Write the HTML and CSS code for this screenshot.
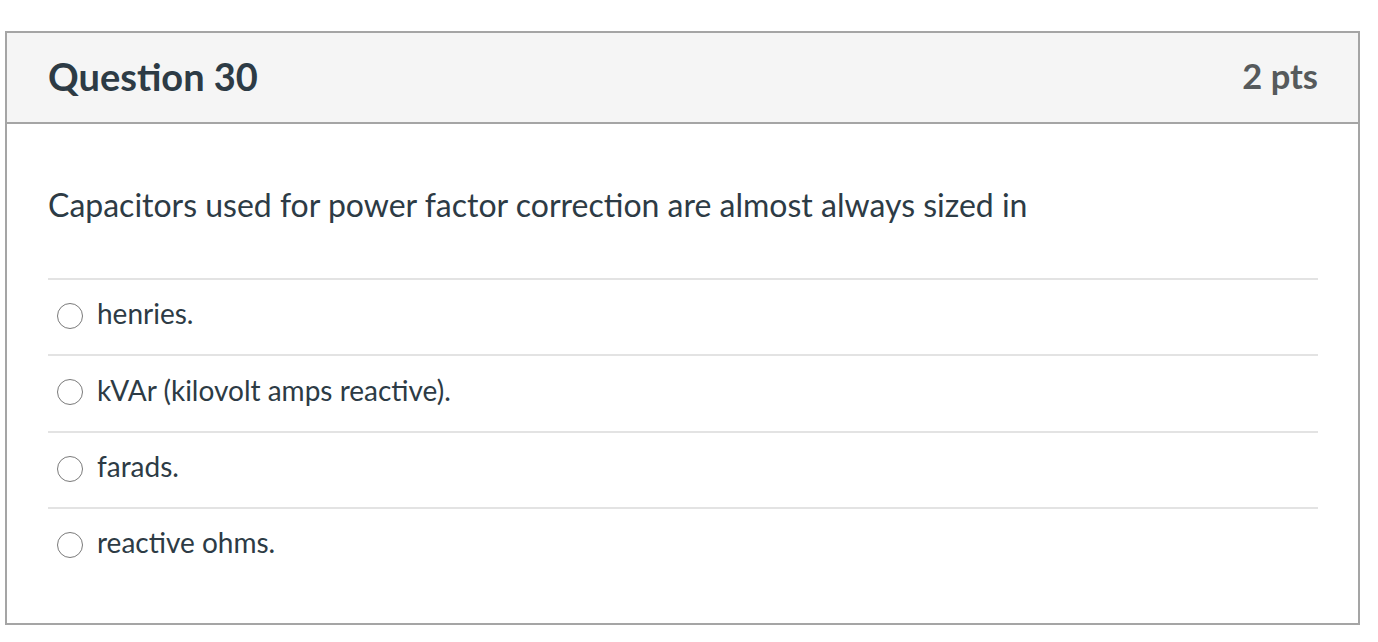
FILE: index.html
```html
<!DOCTYPE html>
<html>
<head>
<meta charset="utf-8">
<link rel="stylesheet" href="styles.css">
</head>
<body>
<div class="question">
  <div class="q-header">
    <h2 class="q-title">Question 30</h2>
    <span class="q-pts">2 pts</span>
  </div>
  <div class="q-body">
    <p class="q-text">Capacitors used for power factor correction are almost always sized in</p>
    <div class="answers">
      <label class="answer"><span class="radio"></span><span class="a-text">henries.</span></label>
      <label class="answer"><span class="radio"></span><span class="a-text">kVAr (kilovolt amps reactive).</span></label>
      <label class="answer"><span class="radio"></span><span class="a-text">farads.</span></label>
      <label class="answer"><span class="radio"></span><span class="a-text">reactive ohms.</span></label>
    </div>
  </div>
</div>
</body>
</html>
```
FILE: styles.css
```css
html, body {
  margin: 0;
  padding: 0;
  background: #fff;
}
body {
  font-family: Lato, "Open Sans", sans-serif;
  color: #2d3b45;
}
.question {
  margin: 31px 0 0 5px;
  width: 1355px;
  height: 594px;
  box-sizing: border-box;
  border: 2px solid #a5a5a5;
}
.q-header {
  display: flex;
  justify-content: space-between;
  align-items: center;
  height: 91px;
  box-sizing: border-box;
  background: #f5f5f5;
  border-bottom: 2px solid #a5a5a5;
  padding: 0 40px 4px 41px;
}
.q-title {
  margin: 0;
  font-size: 38px;
  font-weight: 700;
  color: #2d3b45;
}
.q-pts {
  font-size: 34.5px;
  font-weight: 700;
  color: #565a5c;
}
.q-body {
  padding: 58px 40px 0 41px;
}
.q-text {
  margin: 0 0 51px;
  font-size: 32px;
  line-height: 45px;
}
.answers {
  display: flex;
  flex-direction: column;
}
.answer {
  display: flex;
  align-items: center;
  gap: 14px;
  height: 76.3px;
  box-sizing: border-box;
  border-top: 2px solid #e3e3e3;
  padding: 0 0 2px 9px;
}
.radio {
  width: 24px;
  height: 24px;
  border: 1px solid #7a7a7a;
  border-radius: 50%;
  background: #fff;
  flex: none;
}
.a-text {
  font-size: 28px;
  line-height: 1.2;
  margin-bottom: 4px;
}
```
